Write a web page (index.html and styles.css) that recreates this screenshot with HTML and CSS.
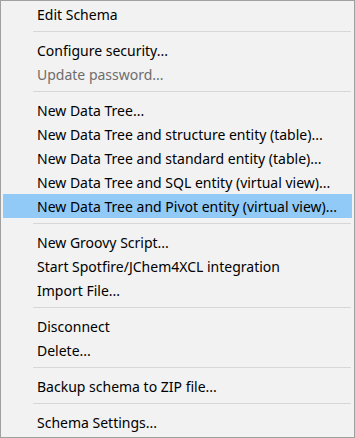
FILE: index.html
```html
<!DOCTYPE html>
<html lang="en">
<head>
  <meta charset="UTF-8">
  <title>Schema menu</title>
  <link rel="stylesheet" href="styles.css">
</head>
<body>

<div class="menu">
  <div class="item">Edit Schema</div>
  <div class="sep"></div>
  <div class="item">Configure security...</div>
  <div class="item disabled">Update password...</div>
  <div class="sep"></div>
  <div class="item">New Data Tree...</div>
  <div class="item">New Data Tree and structure entity (table)...</div>
  <div class="item">New Data Tree and standard entity (table)...</div>
  <div class="item">New Data Tree and SQL entity (virtual view)...</div>
  <div class="item active">New Data Tree and Pivot entity (virtual view)...</div>
  <div class="sep"></div>
  <div class="item">New Groovy Script...</div>
  <div class="item">Start Spotfire/JChem4XCL integration</div>
  <div class="item">Import File...</div>
  <div class="sep"></div>
  <div class="item">Disconnect</div>
  <div class="item">Delete...</div>
  <div class="sep"></div>
  <div class="item">Backup schema to ZIP file...</div>
  <div class="sep"></div>
  <div class="item">Schema Settings...</div>
</div>

</body>
</html>
```

FILE: styles.css
```css
body {
  margin: 0;
  font-family: 'Noto Sans', sans-serif;
}

.menu {
  width: 355px;
  height: 438px;
  box-sizing: border-box;
  border: 1px solid #a0a0a0;
  background-color: #f2f2f2;
  padding: 1px 0 3px 0;
}

.item {
  height: 24px;
  line-height: 25px;
  margin: 0 2px;
  padding-left: 34px;
  font-size: 14px;
  color: #000;
  white-space: nowrap;
}

.item.disabled {
  color: #6d6d6d;
}

.item.active {
  background-color: #91c9f7;
}

.sep {
  height: 1px;
  margin: 5px 3px 6px 32px;
  background-color: #d7d7d7;
}
```
